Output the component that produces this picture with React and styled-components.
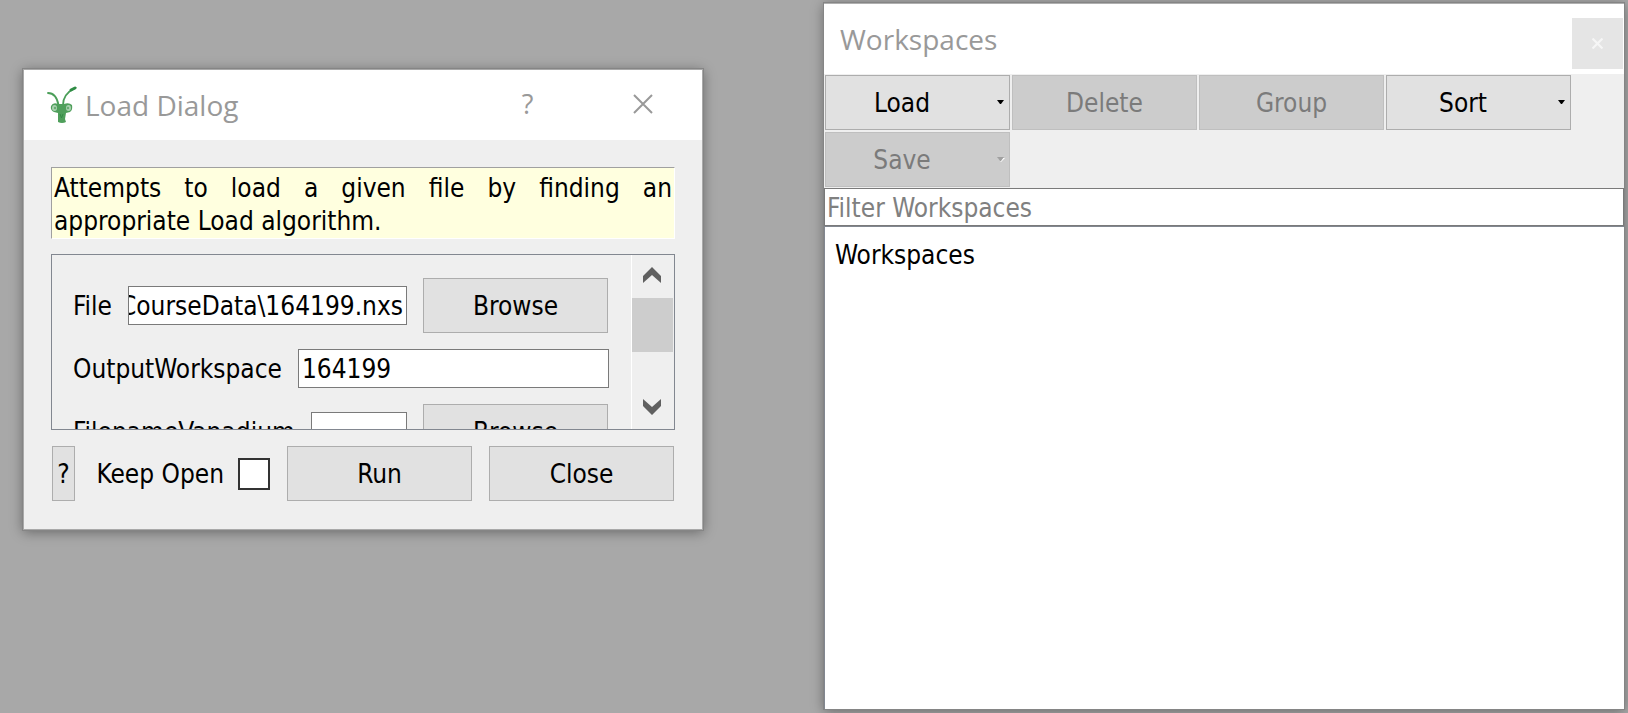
import React, { useEffect, useRef } from 'react';
import styled, { createGlobalStyle } from 'styled-components';

const GlobalStyle = createGlobalStyle`
  *, *::before, *::after { box-sizing: border-box; }
  body {
    margin: 0;
    background: #a8a8a8;
    color: #000;
    font: 26px/32px "DejaVu Sans Condensed", "Noto Sans", sans-serif;
  }
  button, input { font: inherit; color: inherit; margin: 0; }
  p, ul, h1 { margin: 0; padding: 0; }
`;

const Desktop = styled.div`
  display: grid;
  grid-template-columns: minmax(0, 680fr) minmax(0, 800fr);
  column-gap: 121px;
  min-height: 100vh;
  padding: 3px 4px 4px 23px;
`;

const Window = styled.section`
  display: flex;
  flex-direction: column;
  background: #efefef;
  box-shadow: 0 0 0 1px #858585, 0 2px 12px rgba(0, 0, 0, 0.4);
`;

const DialogWindow = styled(Window)`
  align-self: start;
  margin-top: 66px;
  border: 1px solid #a9a9a9;
`;

const DockWindow = styled(Window)`
  border-top: 1px solid #b0b0b0;
`;

const TitleBar = styled.header`
  display: flex;
  align-items: center;
  height: 70px;
  flex: none;
  background: #fff;
  color: #999;
`;

const DialogTitleBar = styled(TitleBar)`
  padding: 0 2px 0 22px;
`;

const DockTitleBar = styled(TitleBar)`
  padding: 0 1px 0 16px;
`;

const Title = styled.h1`
  flex: 1;
  font: 400 28px/36px "Open Sans", sans-serif;
`;

const Logo = styled.svg`
  width: 32px;
  height: 40px;
  margin-right: 7px;
`;

const TitleButton = styled.button`
  display: grid;
  place-items: center;
  width: 115px;
  height: 68px;
  padding: 0 0 2px;
  border: 0;
  background: none;
  font: 400 27px/32px "Open Sans", sans-serif;
`;

const DockClose = styled(TitleButton)`
  width: 51px;
  height: 51px;
  margin-top: 8px;
  padding: 0;
  background: #e5e5e5;
  color: #f6f6f6;
`;

const DialogBody = styled.div`
  display: flex;
  flex-direction: column;
  gap: 16px;
  padding: 27px 27px 28px;
`;

const Message = styled.p`
  padding: 4px 2px 0;
  border: 1px solid #fff;
  border-top-color: #a0a0a0;
  border-left-color: #a0a0a0;
  background: #ffffdf;
  line-height: 33px;
  text-align: justify;
`;

const ScrollArea = styled.div`
  display: flex;
  height: 176px;
  margin-top: -1px;
  border: 1px solid #828790;
`;

const Fields = styled.form`
  display: flex;
  flex: 1;
  min-width: 0;
  flex-direction: column;
  gap: 16px;
  padding: 23px 22px 0 21px;
  overflow: hidden;
`;

const FieldRow = styled.div`
  display: flex;
  align-items: center;
  flex: none;
`;

const FileRow = styled(FieldRow)`
  padding-right: 1px;
`;

const FieldLabel = styled.label`
  flex: none;
  margin-right: 16px;
`;

const TextInput = styled.input`
  flex: 1;
  min-width: 0;
  height: 39px;
  padding: 0 3px 0 ${(p) => (p.$flush ? '0' : '3px')};
  border: 1px solid #7a7a7a;
  border-radius: 0;
  background: #fff;
  outline: none;
`;

const PushButton = styled.button`
  position: relative;
  flex: none;
  width: ${(p) => (p.$narrow ? '23px' : '185px')};
  height: 55px;
  padding: 0 ${(p) => (p.$menu ? '31px' : '0')} 0 0;
  border: 1px solid #adadad;
  background: #e1e1e1;
  ${FieldRow} & { margin-left: 16px; }
  &:disabled {
    border-color: #bfbfbf;
    background: #cccccc;
    color: #7b7b7b;
  }
`;

const MenuArrow = styled.svg`
  position: absolute;
  right: 3px;
  top: 23px;
  width: 10px;
  height: 8px;
`;

const ScrollBar = styled.div`
  display: flex;
  flex: none;
  flex-direction: column;
  width: 43px;
  padding-right: 1px;
  border-left: 1px solid #fff;
`;

const ScrollButton = styled.button`
  display: grid;
  place-items: center;
  height: 43px;
  padding: ${(p) => (p.$down ? '0 2px 2px 0' : '0 2px 4px 0')};
  border: 0;
  background: none;
`;

const ScrollTrack = styled.div`
  flex: 1;
`;

const ScrollThumb = styled.div`
  height: 54px;
  background: #cdcdcd;
`;

const DialogFooter = styled.footer`
  display: flex;
  align-items: center;
  gap: 17px;
  padding: 0 1px;
`;

const KeepOpen = styled.label`
  display: flex;
  flex: 1;
  align-items: center;
  justify-content: flex-end;
  gap: 14px;
  white-space: nowrap;
`;

const CheckBox = styled.input`
  appearance: none;
  width: 32px;
  height: 32px;
  border: 2px solid #333;
  background: #fff;
`;

const Toolbar = styled.div`
  display: flex;
  flex-wrap: wrap;
  gap: 2px;
  padding: 1px;
`;

const FilterInput = styled(TextInput)`
  flex: none;
  width: 100%;
  height: 38px;
  padding: 2px 2px 0;
  &::placeholder { color: #808080; opacity: 1; }
`;

const WorkspaceTree = styled.ul`
  flex: 1;
  padding: 12px 10px;
  border: solid #828790;
  border-width: 1px 0 0 1px;
  background: #fff;
  list-style: none;
`;

function MantisLogo() {
  return (
    <Logo viewBox="0 0 32 40" aria-hidden="true">
      <g fill="none" stroke="#4a9e58" strokeLinecap="round">
        <path d="M2 8 C8 8 11 12 12.500 20" strokeWidth="1.800" />
        <path d="M17 20 C17 13 21 7 29 3" strokeWidth="1.800" />
        <path d="M25 5 L29 3" stroke="#2f8c45" strokeWidth="3" />
      </g>
      <path
        d="M5 21 Q7 17 12 19 L18 19 Q23 17 26 20 Q27 25 24 27 L20 28 L19 34 L20 37 Q16 39 12 37 L12 28 L8 27 Q4 25 5 21Z"
        fill="#4f9f5b"
      />
      <ellipse cx="8.500" cy="23" rx="2.500" ry="3" fill="#a9d1af" />
      <ellipse cx="22.500" cy="23" rx="2.500" ry="3" fill="#a9d1af" />
      <circle cx="9" cy="23" r="1.200" fill="#66ad72" />
      <circle cx="22" cy="23" r="1.200" fill="#66ad72" />
      <path d="M14 29 L15.500 33 L17 29" fill="none" stroke="#348b46" />
    </Logo>
  );
}

function Cross({ size, weight }) {
  return (
    <svg width={size} height={size} viewBox="0 0 20 20" aria-hidden="true">
      <path d="M1 1 L19 19 M19 1 L1 19" fill="none" stroke="currentColor" strokeWidth={weight} />
    </svg>
  );
}

function Chevron({ down }) {
  return (
    <svg width="18" height="16" viewBox="0 0 18 16" aria-hidden="true">
      <path d={down ? 'M0 0 L9 8 L18 0 V7 L9 16 L0 7Z' : 'M0 16 L9 8 L18 16 V9 L9 0 L0 9Z'} fill="#606060" />
    </svg>
  );
}

function ToolButton({ children, menu, disabled }) {
  return (
    <PushButton type="button" $menu={menu} disabled={disabled}>
      {children}
      {menu && (
        <MenuArrow viewBox="0 0 10 8" aria-hidden="true">
          {disabled && <path d="M2 2 H9 L5 6Z" fill="#fff" />}
          <path d="M1 1 H8 L5 5 H4Z" fill={disabled ? '#a0a0a0' : '#000'} />
        </MenuArrow>
      )}
    </PushButton>
  );
}

function FileInput(props) {
  const ref = useRef(null);
  useEffect(() => {
    ref.current.scrollLeft = ref.current.scrollWidth;
  }, []);
  return <TextInput ref={ref} type="text" $flush {...props} />;
}

function LoadDialog() {
  return (
    <DialogWindow aria-label="Load Dialog">
      <DialogTitleBar>
        <MantisLogo />
        <Title>Load Dialog</Title>
        <TitleButton type="button">?</TitleButton>
        <TitleButton type="button" aria-label="Close dialog"><Cross size={20} weight={2} /></TitleButton>
      </DialogTitleBar>
      <DialogBody>
        <Message>Attempts to load a given file by finding an appropriate Load algorithm.</Message>
        <ScrollArea>
          <Fields>
            <FileRow>
              <FieldLabel htmlFor="file">File</FieldLabel>
              <FileInput id="file" defaultValue="CourseData\164199.nxs" />
              <PushButton type="button">Browse</PushButton>
            </FileRow>
            <FieldRow>
              <FieldLabel htmlFor="output">OutputWorkspace</FieldLabel>
              <TextInput id="output" type="text" defaultValue="164199" />
            </FieldRow>
            <FileRow>
              <FieldLabel htmlFor="vanadium">FilenameVanadium</FieldLabel>
              <TextInput id="vanadium" type="text" />
              <PushButton type="button">Browse</PushButton>
            </FileRow>
          </Fields>
          <ScrollBar>
            <ScrollButton type="button" aria-label="Scroll up"><Chevron /></ScrollButton>
            <ScrollTrack><ScrollThumb /></ScrollTrack>
            <ScrollButton type="button" aria-label="Scroll down" $down><Chevron down /></ScrollButton>
          </ScrollBar>
        </ScrollArea>
        <DialogFooter>
          <PushButton type="button" $narrow>?</PushButton>
          <KeepOpen>Keep Open<CheckBox type="checkbox" /></KeepOpen>
          <PushButton type="button">Run</PushButton>
          <PushButton type="button">Close</PushButton>
        </DialogFooter>
      </DialogBody>
    </DialogWindow>
  );
}

function WorkspacesDock() {
  return (
    <DockWindow aria-label="Workspaces">
      <DockTitleBar>
        <Title>Workspaces</Title>
        <DockClose type="button" aria-label="Close workspaces"><Cross size={11} weight={4} /></DockClose>
      </DockTitleBar>
      <Toolbar>
        <ToolButton menu>Load</ToolButton>
        <ToolButton disabled>Delete</ToolButton>
        <ToolButton disabled>Group</ToolButton>
        <ToolButton menu>Sort</ToolButton>
        <ToolButton menu disabled>Save</ToolButton>
      </Toolbar>
      <FilterInput type="text" placeholder="Filter Workspaces" aria-label="Filter Workspaces" />
      <WorkspaceTree>
        <li>Workspaces</li>
      </WorkspaceTree>
    </DockWindow>
  );
}

export default function App() {
  return (
    <>
      <GlobalStyle />
      <Desktop>
        <LoadDialog />
        <WorkspacesDock />
      </Desktop>
    </>
  );
}
